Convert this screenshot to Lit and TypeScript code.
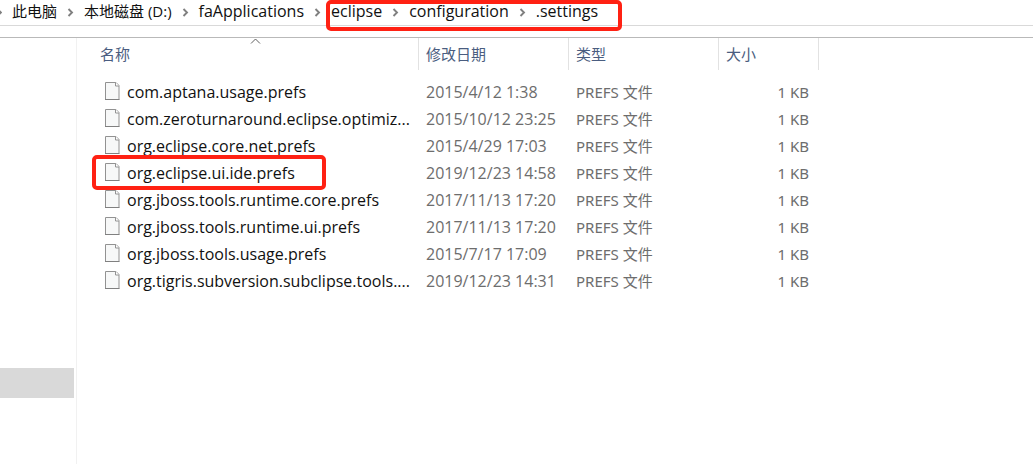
import { LitElement, html, css, svg } from "lit";
import { customElement, property } from "lit/decorators.js";

interface FileEntry {
  name: string;
  modified: string;
  marked?: boolean;
}

const FILES: FileEntry[] = [
  { name: "com.aptana.usage.prefs", modified: "2015/4/12 1:38" },
  { name: "com.zeroturnaround.eclipse.optimiz...", modified: "2015/10/12 23:25" },
  { name: "org.eclipse.core.net.prefs", modified: "2015/4/29 17:03" },
  { name: "org.eclipse.ui.ide.prefs", modified: "2019/12/23 14:58", marked: true },
  { name: "org.jboss.tools.runtime.core.prefs", modified: "2017/11/13 17:20" },
  { name: "org.jboss.tools.runtime.ui.prefs", modified: "2017/11/13 17:20" },
  { name: "org.jboss.tools.usage.prefs", modified: "2015/7/17 17:09" },
  { name: "org.tigris.subversion.subclipse.tools....", modified: "2019/12/23 14:31" },
];

const chevron = svg`<path d="M1.5 1 L5 4.5 L1.5 8" fill="none" stroke="#808080" stroke-width="1.9"/>`;

@customElement("path-bar")
export class PathBar extends LitElement {
  static styles = css`
    :host {
      display: block;
      height: 25px;
      border-bottom: 1px solid #d9d9d9;
    }
    nav,
    .marked {
      display: flex;
      align-items: center;
    }
    nav {
      height: 24px;
      white-space: nowrap;
    }
    .marked {
      position: relative;
    }
    .frame {
      position: absolute;
      inset: 0 -24px -7px -5px;
      border: 4px solid #ff2113;
      border-radius: 5px;
      pointer-events: none;
    }
    a {
      color: #111;
      text-decoration: none;
      line-height: 22px;
      padding-bottom: 2px;
    }
    .latin {
      font-size: 16px;
    }
    svg {
      flex: none;
      width: 7px;
      height: 9px;
      margin: 0 10px;
    }
    .first {
      width: 2px;
      margin: 0 10px 0 0;
    }
  `;

  private sep() {
    return html`<svg viewBox="0 0 7 9" aria-hidden="true">${chevron}</svg>`;
  }

  render() {
    return html`<nav aria-label="path">
      <svg class="first" viewBox="4 0 2 9" aria-hidden="true">${chevron}</svg>
      <a href="#">此电脑</a>${this.sep()}<a href="#">本地磁盘 (D:)</a>${this.sep()}<a class="latin" href="#">faApplications</a>${this.sep()}
      <div class="marked">
        <a class="latin" href="#">eclipse</a>${this.sep()}<a class="latin" href="#">configuration</a>${this.sep()}<a class="latin" href="#">.settings</a>
        <span class="frame"></span>
      </div>
    </nav>`;
  }
}

@customElement("file-list")
export class FileList extends LitElement {
  @property({ attribute: false }) files: FileEntry[] = [];

  static styles = css`
    :host {
      display: block;
    }
    table {
      table-layout: fixed;
      width: 742px;
      border-collapse: separate;
      border-spacing: 0;
      white-space: nowrap;
    }
    .name {
      width: 342px;
    }
    .col {
      width: 150px;
    }
    .size {
      width: 100px;
    }
    th {
      height: 32px;
      box-sizing: border-box;
      padding: 0 7px;
      border-right: 1px solid #e2e2e2;
      color: #4a5d80;
      font-weight: 400;
      text-align: left;
    }
    th:first-child {
      position: relative;
      padding-left: 23px;
    }
    .sort {
      position: absolute;
      top: 0;
      left: 173px;
      width: 11px;
      height: 6px;
    }
    tbody::before {
      content: "";
      display: block;
      height: 8px;
    }
    td {
      height: 27px;
      box-sizing: border-box;
      padding: 0 7px;
      color: #6d6d6d;
      font-family: "Noto Sans", "Noto Sans CJK SC", sans-serif;
    }
    td:first-child {
      padding-left: 28px;
      color: #111;
    }
    td:last-child {
      padding-right: 10px;
      text-align: right;
    }
    .latin {
      font-family: "Open Sans", sans-serif;
      font-size: 16px;
    }
    .file {
      position: relative;
      display: flex;
      align-items: center;
      gap: 7px;
    }
    .icon {
      width: 15px;
      height: 18px;
      margin-bottom: 2px;
    }
    .frame {
      position: absolute;
      top: -8px;
      bottom: -7px;
      left: -13px;
      width: 226px;
      border: 4px solid #ff2113;
      border-radius: 5px;
      pointer-events: none;
    }
  `;

  render() {
    return html`<table>
      <colgroup>
        <col class="name" /><col class="col" /><col class="col" /><col class="size" />
      </colgroup>
      <thead>
        <tr>
          <th scope="col">
            名称<svg class="sort" viewBox="0 0 11 6" aria-hidden="true">
              <path d="M1 5.5 L5.5 1 L10 5.5" fill="none" stroke="#606060" />
            </svg>
          </th>
          <th scope="col">修改日期</th>
          <th scope="col">类型</th>
          <th scope="col">大小</th>
        </tr>
      </thead>
      <tbody>
        ${this.files.map(
          (f) => html`<tr>
            <td class="latin">
              <div class="file">
                <svg class="icon" viewBox="0 0 15 18" aria-hidden="true">
                  <path d="M.5 .5 H11 L14 3.5 V17.5 H.5 Z" fill="#f7f8f8" stroke="#929292" />
                  <path d="M0 17.5 H14.5" stroke="#808080" />
                  <path d="M10.5 .5 V4 H14" fill="#fff" stroke="#929292" />
                </svg>
                <span>${f.name}</span>
                ${f.marked ? html`<span class="frame"></span>` : null}
              </div>
            </td>
            <td class="latin">${f.modified}</td>
            <td>PREFS 文件</td>
            <td>1 KB</td>
          </tr>`
        )}
      </tbody>
    </table>`;
  }
}

@customElement("app-root")
export class AppRoot extends LitElement {
  static styles = css`
    :host {
      display: flex;
      flex-direction: column;
      min-height: 100vh;
      background: #fff;
      font: 15px/20px "Open Sans", "Noto Sans CJK SC", sans-serif;
    }
    .body {
      flex: 1;
      display: flex;
      margin-top: 11px;
      border-top: 1px solid #b9b9b9;
    }
    aside {
      flex: none;
      width: 76px;
      border-right: 1px solid #f1f1f1;
    }
    .selected {
      height: 30px;
      margin: 330px 2px 0 0;
      background: #d9d9d9;
    }
    file-list {
      flex: 1;
    }
  `;

  render() {
    return html`<path-bar></path-bar>
      <div class="body">
        <aside><div class="selected"></div></aside>
        <file-list .files=${FILES}></file-list>
      </div>`;
  }
}
